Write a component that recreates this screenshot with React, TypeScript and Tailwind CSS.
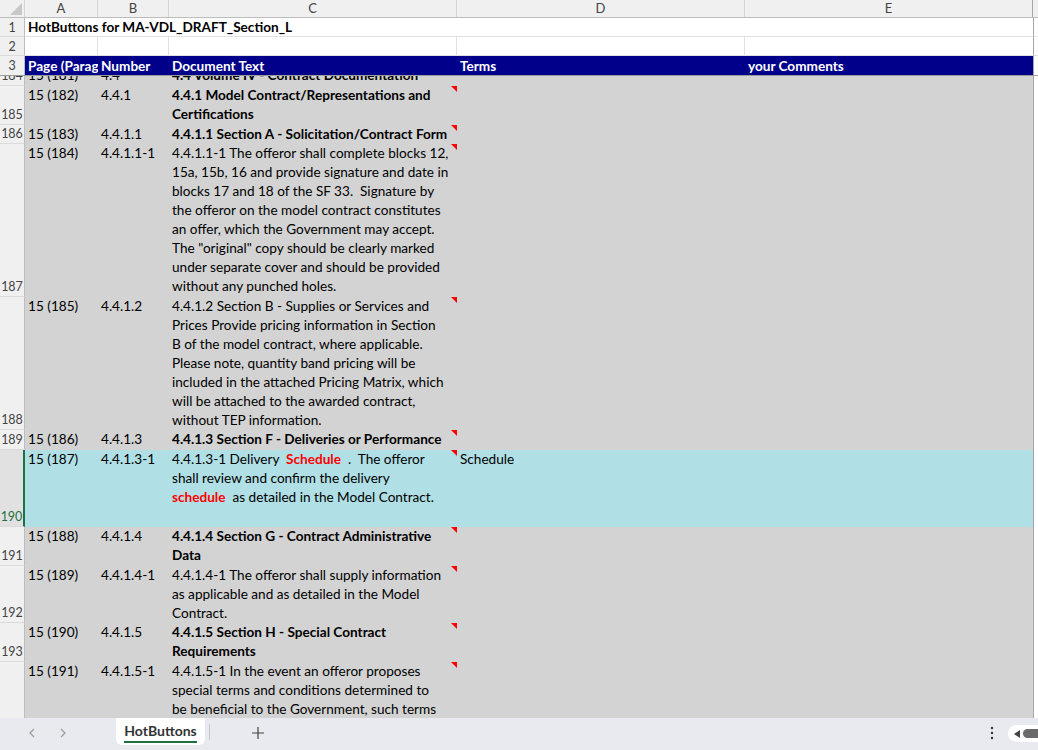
import React from 'react';

type Row = {
    n: number;
    h: number;
    a: string;
    b: string;
    c: React.ReactNode[];
    d?: string;
    bold?: boolean;
    teal?: boolean;
};

const RED = 'text-[#ff0000] font-bold';

const rows: Row[] = [
    { n: 185, h: 39, a: '15 (182)', b: '4.4.1', bold: true, c: ['4.4.1 Model Contract/Representations and', 'Certifications'] },
    { n: 186, h: 19, a: '15 (183)', b: '4.4.1.1', bold: true, c: ['4.4.1.1 Section A - Solicitation/Contract Form'] },
    {
        n: 187, h: 153, a: '15 (184)', b: '4.4.1.1-1', c: [
            '4.4.1.1-1 The offeror shall complete blocks 12,',
            '15a, 15b, 16 and provide signature and date in',
            'blocks 17 and 18 of the SF 33.  Signature by',
            'the offeror on the model contract constitutes',
            'an offer, which the Government may accept.',
            'The "original" copy should be clearly marked',
            'under separate cover and should be provided',
            'without any punched holes.',
        ]
    },
    {
        n: 188, h: 133, a: '15 (185)', b: '4.4.1.2', c: [
            '4.4.1.2 Section B - Supplies or Services and',
            'Prices Provide pricing information in Section',
            'B of the model contract, where applicable.',
            'Please note, quantity band pricing will be',
            'included in the attached Pricing Matrix, which',
            'will be attached to the awarded contract,',
            'without TEP information.',
        ]
    },
    { n: 189, h: 20, a: '15 (186)', b: '4.4.1.3', bold: true, c: ['4.4.1.3 Section F - Deliveries or Performance'] },
    {
        n: 190, h: 77, a: '15 (187)', b: '4.4.1.3-1', teal: true, d: 'Schedule', c: [
            <>4.4.1.3-1 Delivery  <span className={RED}>Schedule</span>  .  The offeror</>,
            'shall review and confirm the delivery',
            <><span className={RED}>schedule</span>  as detailed in the Model Contract.</>,
        ]
    },
    { n: 191, h: 39, a: '15 (188)', b: '4.4.1.4', bold: true, c: ['4.4.1.4 Section G - Contract Administrative', 'Data'] },
    {
        n: 192, h: 57, a: '15 (189)', b: '4.4.1.4-1', c: [
            '4.4.1.4-1 The offeror shall supply information',
            'as applicable and as detailed in the Model',
            'Contract.',
        ]
    },
    { n: 193, h: 39, a: '15 (190)', b: '4.4.1.5', bold: true, c: ['4.4.1.5 Section H - Special Contract', 'Requirements'] },
    {
        n: 194, h: 96, a: '15 (191)', b: '4.4.1.5-1', c: [
            '4.4.1.5-1 In the event an offeror proposes',
            'special terms and conditions determined to',
            'be beneficial to the Government, such terms',
            'and conditions shall be identified.',
        ]
    },
];

const Tri = () => (
    <svg width="6" height="6" viewBox="0 0 6 6" className="absolute right-0 top-0">
        <polygon points="0,0 6,0 6,6" fill="#ff0000" />
    </svg>
);

const DataRow = ({ r }: { r: Row }) => {
    const bg = r.teal ? 'bg-[#b0dfe5]' : 'bg-[#d3d3d3]';
    return (
        <div className="flex shrink-0" style={{ height: r.h }}>
            <div
                className={`w-[25px] shrink-0 flex items-end justify-center border-b border-[#dadada] ${
                    r.teal ? 'bg-[#e1e1e1] text-[#1e7145] border-r-2 border-r-[#1e7145]' : 'bg-[#f0f0f0] text-[#444] border-r border-r-[#bdbdbd]'
                } text-[12.5px] leading-[19px]`}
            >
                {r.n}
            </div>
            <div className={`flex flex-1 ${bg} leading-[19px] text-black`}>
                <div className="w-[73px] shrink-0 pl-[3px] whitespace-pre">{r.a}</div>
                <div className="w-[71px] shrink-0 pl-[3px] whitespace-pre">{r.b}</div>
                <div className={`relative w-[288px] shrink-0 pl-[3px] whitespace-pre ${r.bold ? 'font-bold' : ''}`}>
                    {r.c.map((l, i) => (
                        <div key={i}>{l}</div>
                    ))}
                    <Tri />
                </div>
                <div className="w-[288px] shrink-0 pl-[3px] whitespace-pre">{r.d ?? ''}</div>
                <div className="w-[288px] shrink-0" />
                <div className="flex-1 bg-white border-l border-[#a6a6a6]" />
            </div>
        </div>
    );
};

export default function App() {
    return (
        <div className="w-[1038px] h-[750px] overflow-hidden flex flex-col bg-white text-[13.6px] font-['Lato','Noto_Sans',sans-serif]">
            {/* column letters */}
            <div className="flex h-[18px] shrink-0 bg-[#f0f0f0] border-b border-[#bdbdbd] text-[#444] text-[13px] leading-[17px]">
                <div className="relative w-[25px] shrink-0 border-r border-[#d4d4d4]">
                    <svg width="12" height="12" viewBox="0 0 12 12" className="absolute right-[2px] bottom-[2px]">
                        <polygon points="12,0 12,12 0,12" fill="#c8c8c8" />
                    </svg>
                </div>
                <div className="w-[73px] shrink-0 text-center border-r border-[#d4d4d4]">A</div>
                <div className="w-[71px] shrink-0 text-center border-r border-[#d4d4d4]">B</div>
                <div className="w-[288px] shrink-0 text-center border-r border-[#d4d4d4]">C</div>
                <div className="w-[288px] shrink-0 text-center border-r border-[#d4d4d4]">D</div>
                <div className="w-[288px] shrink-0 text-center border-r border-[#a6a6a6]">E</div>
                <div className="flex-1" />
            </div>

            {/* row 1 */}
            <div className="flex h-[19px] shrink-0 leading-[19px]">
                <div className="w-[25px] shrink-0 bg-[#f0f0f0] border-r border-[#bdbdbd] border-b border-b-[#dadada] text-center text-[12.5px] text-[#444]">1</div>
                <div className="w-[1008px] shrink-0 border-b border-[#e1e1e1] pl-[3px] font-bold text-black">HotButtons for MA-VDL_DRAFT_Section_L</div>
                <div className="flex-1 border-l border-[#a6a6a6] border-b border-b-[#e1e1e1]" />
            </div>

            {/* row 2 */}
            <div className="flex h-[19px] shrink-0">
                <div className="w-[25px] shrink-0 bg-[#f0f0f0] border-r border-[#bdbdbd] border-b border-b-[#dadada] text-center text-[12.5px] leading-[19px] text-[#444]">2</div>
                <div className="w-[73px] shrink-0 border-r border-b border-[#e1e1e1]" />
                <div className="w-[71px] shrink-0 border-r border-b border-[#e1e1e1]" />
                <div className="w-[288px] shrink-0 border-r border-b border-[#e1e1e1]" />
                <div className="w-[288px] shrink-0 border-r border-b border-[#e1e1e1]" />
                <div className="w-[288px] shrink-0 border-b border-[#e1e1e1]" />
                <div className="flex-1 border-l border-[#a6a6a6] border-b border-b-[#e1e1e1]" />
            </div>

            {/* row 3 header */}
            <div className="flex h-[20px] shrink-0 border-b border-[#9a9a9a] leading-[20px]">
                <div className="w-[25px] shrink-0 bg-[#f0f0f0] border-r border-[#bdbdbd] text-center text-[12.5px] text-[#444]">3</div>
                <div className="flex flex-1 bg-[#00008b] text-white font-bold">
                    <div className="w-[73px] shrink-0 pl-[3px] overflow-hidden whitespace-nowrap">Page (Paragraph)</div>
                    <div className="w-[71px] shrink-0 pl-[3px]">Number</div>
                    <div className="w-[288px] shrink-0 pl-[3px]">Document Text</div>
                    <div className="w-[288px] shrink-0 pl-[3px]">Terms</div>
                    <div className="w-[288px] shrink-0 pl-[3px]">your Comments</div>
                </div>
                <div className="w-[5px] shrink-0 border-l border-[#a6a6a6]" />
            </div>

            {/* scrolling body */}
            <div className="flex-1 overflow-hidden flex flex-col">
                {/* partially hidden row 184 */}
                <div className="h-[10px] shrink-0 overflow-hidden flex">
                    <div className="w-[25px] shrink-0 bg-[#f0f0f0] border-r border-[#bdbdbd] border-b border-b-[#dadada] text-[12.5px] text-[#444] text-center">
                        <div className="-mt-[10px] leading-[19px]">184</div>
                    </div>
                    <div className="flex flex-1 bg-[#d3d3d3] text-black">
                        <div className="flex -mt-[10px] leading-[19px] h-[19px]">
                            <div className="w-[73px] shrink-0 pl-[3px]">15 (181)</div>
                            <div className="w-[71px] shrink-0 pl-[3px]">4.4</div>
                            <div className="w-[288px] shrink-0 pl-[3px] font-bold whitespace-nowrap">4.4 Volume IV - Contract Documentation</div>
                        </div>
                    </div>
                    <div className="w-[5px] shrink-0 bg-white border-l border-[#a6a6a6]" />
                </div>
                {rows.map((r) => (
                    <DataRow key={r.n} r={r} />
                ))}
            </div>

            {/* sheet tabs */}
            <div className="h-[32px] shrink-0 flex items-start bg-[#e8eaef] text-[#555]">
                <div className="w-[116px] shrink-0 flex items-center h-[30px] pl-[26px] gap-[19px] text-[#9a9a9a]">
                    <svg width="12" height="12" viewBox="0 0 12 12" fill="none" stroke="currentColor" strokeWidth="1.2">
                        <path d="M8 2 L4 6 L8 10" />
                    </svg>
                    <svg width="12" height="12" viewBox="0 0 12 12" fill="none" stroke="currentColor" strokeWidth="1.2">
                        <path d="M4 2 L8 6 L4 10" />
                    </svg>
                </div>
                <div className="w-[89px] h-[27px] shrink-0 bg-white rounded-b-md flex flex-col items-center pt-[4px]">
                    <span className="font-bold text-[#333] text-[14px] leading-[17px]">HotButtons</span>
                    <div className="mt-[2px] w-[73px] h-[2px] bg-[#1e7145]" />
                </div>
                <div className="ml-[4px] mt-[6px] w-px h-[16px] bg-[#c4c6cc]" />
                <div className="ml-[41px] h-[30px] flex items-center text-[#444]">
                    <svg width="14" height="14" viewBox="0 0 14 14" stroke="currentColor" strokeWidth="1.2">
                        <path d="M7 1 V13 M1 7 H13" />
                    </svg>
                </div>
                <div className="flex-1" />
                <div className="h-[30px] flex items-center mr-[14px]">
                    <svg width="4" height="14" viewBox="0 0 4 14" fill="#333">
                        <circle cx="2" cy="2" r="1.2" />
                        <circle cx="2" cy="7" r="1.2" />
                        <circle cx="2" cy="12" r="1.2" />
                    </svg>
                </div>
                <div className="mt-[7px] w-[30px] h-[17px] bg-white rounded-l-full flex items-center pl-[6px] gap-[3px]">
                    <svg width="6" height="8" viewBox="0 0 6 8" fill="#444">
                        <polygon points="6,0 6,8 0,4" />
                    </svg>
                    <div className="flex-1 h-[9px] bg-[#6b6b6b] rounded-l-full" />
                </div>
            </div>
        </div>
    );
}
